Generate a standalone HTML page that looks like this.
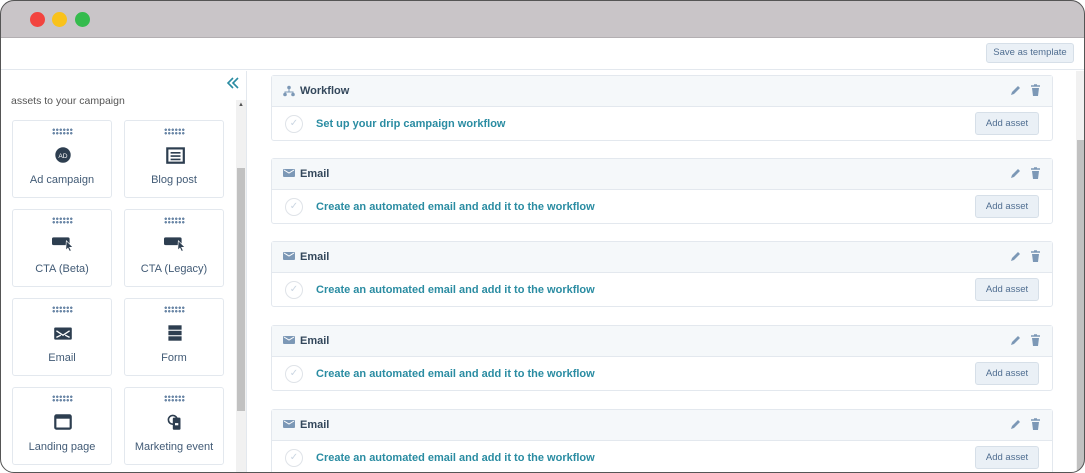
<!DOCTYPE html><html><head><style>
*{box-sizing:border-box;margin:0;padding:0}
body{width:1085px;height:473px;overflow:hidden;background:#fff;font-family:"Liberation Sans",sans-serif;position:relative}
.frame{position:absolute;left:0;top:0;width:1085px;height:473px;border-radius:14px;overflow:hidden;background:#fff}
.border{position:absolute;left:0;top:0;width:1085px;height:473px;border:1px solid #555;border-radius:14px;pointer-events:none;z-index:10}
.top{position:absolute;left:0;top:0;width:100%;height:38px;background:#c9c5c8;border-bottom:1px solid #b3afb2}
.dot{position:absolute;top:12px;width:15px;height:15px;border-radius:50%}
.hdr{position:absolute;left:0;top:38px;width:100%;height:32px;border-bottom:1px solid #e3e8ee}
.save{position:absolute;left:986px;top:43px;width:88px;height:20px;background:#eaf0f6;border:1px solid #d6dfe8;border-radius:3px;font-size:9.5px;color:#506e91;text-align:center;line-height:18px}
.left{position:absolute;left:0;top:71px;width:247px;height:402px;border-right:1px solid #e3e8ee}
.lt{position:absolute;left:11px;top:95px;font-size:10.5px;color:#555}
.chev{position:absolute;left:226px;top:76px}
.sb{position:absolute;left:236px;top:100px;width:10px;height:373px;background:#f1f1f1}
.sbt{position:absolute;left:237px;top:168px;width:8px;height:243px;background:#c1c1c1}
.tile{position:absolute;width:100px;height:78px;border:1px solid #e3e8ee;border-radius:3px;text-align:center}
.tile .g{position:absolute;left:39px;top:7px;width:21px;height:7px;background-image:radial-gradient(circle,#6a86a6 1.1px,transparent 1.3px);background-size:3.5px 3.5px}
.tile .ic{position:absolute;left:39px;top:23px;width:22px;height:22px}
.tile .lb{position:absolute;left:0;width:100%;top:53px;font-size:11px;color:#425b76}
.card{position:absolute;left:271px;width:782px;height:66px;border:1px solid #e3e8ee;border-radius:3px}
.card .h{height:31px;background:#f5f8fa;border-bottom:1px solid #e3e8ee;position:relative}
.card .h b{position:absolute;left:28px;top:9px;font-size:11px;color:#33475b}
.card .h svg.i{position:absolute;left:11px;top:9px}
.card .b{position:relative;height:34px}
.chk{position:absolute;left:13px;top:8px;width:18px;height:18px;border:1px solid #dfe3e8;border-radius:50%;color:#cbd6e2;font-size:10px;text-align:center;line-height:16px}
.card .b span{position:absolute;left:44px;top:11px;font-size:11px;font-weight:bold;color:#2a8ca2}
.add{position:absolute;left:703px;top:5px;width:64px;height:23px;background:#eaf0f6;border:1px solid #d6dfe8;border-radius:3px;font-size:9.5px;color:#506e91;text-align:center;line-height:21px}
.pen{position:absolute;left:737px;top:9px}
.bin{position:absolute;left:758px;top:8px}
.rsb{position:absolute;left:1076px;top:71px;width:9px;height:402px;background:#f1f1f1}
.rsbt{position:absolute;left:1077px;top:140px;width:7px;height:333px;background:#c1c1c1}
</style></head><body><div class="frame">
<div class="top"><div class="dot" style="left:30px;background:#f2443f"></div><div class="dot" style="left:52px;background:#f9c21b"></div><div class="dot" style="left:75px;background:#35bb4d"></div></div>
<div class="hdr"></div><div class="save">Save as template</div>
<div class="left"></div><div class="lt">assets to your campaign</div>
<svg class="chev" width="14" height="14" viewBox="0 0 14 14"><path d="M7 2L2 7l5 5M12 2L7 7l5 5" stroke="#2a8ca2" stroke-width="1.6" fill="none"/></svg>
<div class="sb"></div><div class="sbt"></div><div style="position:absolute;left:238px;top:102px;font-size:6px;color:#555">▲</div>

<div class="tile" style="left:12px;top:120px"><div class="g"></div><svg class="ic" viewBox="0 0 20 20"><circle cx="10" cy="10" r="7" fill="#2d3e50"/><text x="10" y="12.5" font-size="6" fill="#fff" text-anchor="middle" font-family="Liberation Sans">AD</text></svg><div class="lb">Ad campaign</div></div>
<div class="tile" style="left:124px;top:120px"><div class="g"></div><svg class="ic" viewBox="0 0 20 20"><rect x="3" y="4" width="15" height="13" fill="none" stroke="#2d3e50" stroke-width="2"/><path d="M6 8h9M6 11h9M6 14h9" stroke="#2d3e50" stroke-width="1.5"/></svg><div class="lb">Blog post</div></div>
<div class="tile" style="left:12px;top:209px"><div class="g"></div><svg class="ic" viewBox="0 0 20 20"><rect x="0" y="4" width="16" height="7" rx="1.5" fill="#2d3e50"/><path d="M13 7l6 6-3 0 1.5 3-1.5.7-1.5-3-2 2z" fill="#2d3e50" stroke="#fff" stroke-width=".6"/></svg><div class="lb">CTA (Beta)</div></div>
<div class="tile" style="left:124px;top:209px"><div class="g"></div><svg class="ic" viewBox="0 0 20 20"><rect x="0" y="4" width="16" height="7" rx="1.5" fill="#2d3e50"/><path d="M13 7l6 6-3 0 1.5 3-1.5.7-1.5-3-2 2z" fill="#2d3e50" stroke="#fff" stroke-width=".6"/></svg><div class="lb">CTA (Legacy)</div></div>
<div class="tile" style="left:12px;top:298px"><div class="g"></div><svg class="ic" viewBox="0 0 20 20"><rect x="2" y="5" width="16" height="11" rx="1" fill="#2d3e50"/><path d="M4 8l6 4 6-4M4 14l4-2M16 14l-4-2" stroke="#fff" stroke-width="1.2" fill="none"/></svg><div class="lb">Email</div></div>
<div class="tile" style="left:124px;top:298px"><div class="g"></div><svg class="ic" viewBox="0 0 20 20"><rect x="4" y="3" width="12" height="4" fill="#2d3e50"/><rect x="4" y="8" width="12" height="4" fill="#2d3e50"/><rect x="4" y="13" width="12" height="4" fill="#2d3e50"/></svg><div class="lb">Form</div></div>
<div class="tile" style="left:12px;top:387px"><div class="g"></div><svg class="ic" viewBox="0 0 20 20"><rect x="3" y="4" width="14" height="12" rx="1" fill="none" stroke="#2d3e50" stroke-width="2"/><rect x="3" y="4" width="14" height="3" fill="#2d3e50"/></svg><div class="lb">Landing page</div></div>
<div class="tile" style="left:124px;top:387px"><div class="g"></div><svg class="ic" viewBox="0 0 20 20"><circle cx="8" cy="8" r="4" fill="none" stroke="#2d3e50" stroke-width="1.5"/><rect x="8" y="6" width="7" height="11" rx="1" fill="#2d3e50"/><rect x="10" y="11" width="3" height="2" fill="#fff"/></svg><div class="lb">Marketing event</div></div>

<div class="rsb"></div><div class="rsbt"></div>

<div class="card" style="top:75px"><div class="h"><svg class="i" width="12" height="12" viewBox="0 0 12 12"><circle cx="6" cy="2.5" r="1.8" fill="#7c98b6"/><circle cx="2" cy="9.5" r="1.8" fill="#7c98b6"/><circle cx="10" cy="9.5" r="1.8" fill="#7c98b6"/><path d="M6 4v3M2 8V7h8v1" stroke="#7c98b6" fill="none"/></svg><b>Workflow</b>
<svg class="pen" width="12" height="12" viewBox="0 0 12 12"><path d="M2 10l1-3 6-6 2 2-6 6z" fill="#7c98b6"/></svg><svg class="bin" width="11" height="13" viewBox="0 0 11 13"><path d="M1 2h9M4 1h3" stroke="#7c98b6" stroke-width="1.5"/><path d="M2 4h7l-1 8H3z" fill="#7c98b6"/></svg></div>
<div class="b"><div class="chk">✓</div><span>Set up your drip campaign workflow</span><div class="add">Add asset</div></div></div>

<div class="card" style="top:158px"><div class="h"><svg class="i" width="12" height="10" viewBox="0 0 12 10"><rect x="0" y="1" width="12" height="8" rx="1" fill="#7c98b6"/><path d="M1 2l5 3 5-3" stroke="#fff" fill="none"/></svg><b>Email</b>
<svg class="pen" width="12" height="12" viewBox="0 0 12 12"><path d="M2 10l1-3 6-6 2 2-6 6z" fill="#7c98b6"/></svg><svg class="bin" width="11" height="13" viewBox="0 0 11 13"><path d="M1 2h9M4 1h3" stroke="#7c98b6" stroke-width="1.5"/><path d="M2 4h7l-1 8H3z" fill="#7c98b6"/></svg></div>
<div class="b"><div class="chk">✓</div><span>Create an automated email and add it to the workflow</span><div class="add">Add asset</div></div></div>

<div class="card" style="top:241px"><div class="h"><svg class="i" width="12" height="10" viewBox="0 0 12 10"><rect x="0" y="1" width="12" height="8" rx="1" fill="#7c98b6"/><path d="M1 2l5 3 5-3" stroke="#fff" fill="none"/></svg><b>Email</b>
<svg class="pen" width="12" height="12" viewBox="0 0 12 12"><path d="M2 10l1-3 6-6 2 2-6 6z" fill="#7c98b6"/></svg><svg class="bin" width="11" height="13" viewBox="0 0 11 13"><path d="M1 2h9M4 1h3" stroke="#7c98b6" stroke-width="1.5"/><path d="M2 4h7l-1 8H3z" fill="#7c98b6"/></svg></div>
<div class="b"><div class="chk">✓</div><span>Create an automated email and add it to the workflow</span><div class="add">Add asset</div></div></div>

<div class="card" style="top:325px"><div class="h"><svg class="i" width="12" height="10" viewBox="0 0 12 10"><rect x="0" y="1" width="12" height="8" rx="1" fill="#7c98b6"/><path d="M1 2l5 3 5-3" stroke="#fff" fill="none"/></svg><b>Email</b>
<svg class="pen" width="12" height="12" viewBox="0 0 12 12"><path d="M2 10l1-3 6-6 2 2-6 6z" fill="#7c98b6"/></svg><svg class="bin" width="11" height="13" viewBox="0 0 11 13"><path d="M1 2h9M4 1h3" stroke="#7c98b6" stroke-width="1.5"/><path d="M2 4h7l-1 8H3z" fill="#7c98b6"/></svg></div>
<div class="b"><div class="chk">✓</div><span>Create an automated email and add it to the workflow</span><div class="add">Add asset</div></div></div>

<div class="card" style="top:409px"><div class="h"><svg class="i" width="12" height="10" viewBox="0 0 12 10"><rect x="0" y="1" width="12" height="8" rx="1" fill="#7c98b6"/><path d="M1 2l5 3 5-3" stroke="#fff" fill="none"/></svg><b>Email</b>
<svg class="pen" width="12" height="12" viewBox="0 0 12 12"><path d="M2 10l1-3 6-6 2 2-6 6z" fill="#7c98b6"/></svg><svg class="bin" width="11" height="13" viewBox="0 0 11 13"><path d="M1 2h9M4 1h3" stroke="#7c98b6" stroke-width="1.5"/><path d="M2 4h7l-1 8H3z" fill="#7c98b6"/></svg></div>
<div class="b"><div class="chk">✓</div><span>Create an automated email and add it to the workflow</span><div class="add">Add asset</div></div></div>
</div><div class="border"></div></body></html>
